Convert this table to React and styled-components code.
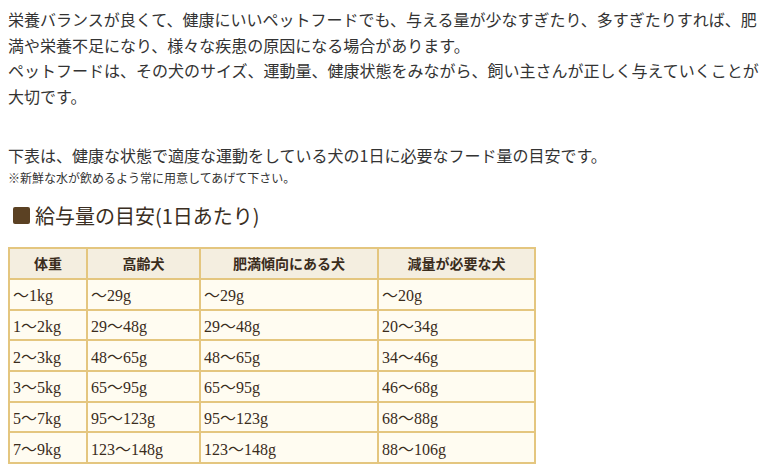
import React from "react";
import styled, { createGlobalStyle } from "styled-components";

const GlobalStyle = createGlobalStyle`
  body {
    margin: 0;
    background: #ffffff;
    font-family: "Noto Sans CJK JP", "Noto Sans", sans-serif;
    color: #333333;
  }
`;

const rows = [
  ["〜1kg", "〜29g", "〜29g", "〜20g"],
  ["1〜2kg", "29〜48g", "29〜48g", "20〜34g"],
  ["2〜3kg", "48〜65g", "48〜65g", "34〜46g"],
  ["3〜5kg", "65〜95g", "65〜95g", "46〜68g"],
  ["5〜7kg", "95〜123g", "95〜123g", "68〜88g"],
  ["7〜9kg", "123〜148g", "123〜148g", "88〜106g"],
];

const columns = [
  { label: "体重", width: 78 },
  { label: "高齢犬", width: 113 },
  { label: "肥満傾向にある犬", width: 178 },
  { label: "減量が必要な犬", width: 157 },
];

const App = () => {
  return (
    <Page>
      <GlobalStyle />
      <Text>
        栄養バランスが良くて、健康にいいペットフードでも、与える量が少なすぎたり、多すぎたりすれば、肥満や栄養不足になり、様々な疾患の原因になる場合があります。
        <br />
        ペットフードは、その犬のサイズ、運動量、健康状態をみながら、飼い主さんが正しく与えていくことが大切です。
      </Text>
      <Text top={34}>
        下表は、健康な状態で適度な運動をしている犬の1日に必要なフード量の目安です。
      </Text>
      <Note>※新鮮な水が飲めるよう常に用意してあげて下さい。</Note>
      <Heading>
        <Square />
        給与量の目安(1日あたり)
      </Heading>
      <Table>
        <thead>
          <tr>
            {columns.map((c) => (
              <Th key={c.label} style={{ width: c.width }}>
                {c.label}
              </Th>
            ))}
          </tr>
        </thead>
        <tbody>
          {rows.map((r) => (
            <tr key={r[0]}>
              {r.map((v, i) => (
                <Td key={i}>{v}</Td>
              ))}
            </tr>
          ))}
        </tbody>
      </Table>
    </Page>
  );
};

const Page = styled.div`
  width: 752px;
  padding: 7px 0 0 8px;
`;

const Text = styled.p`
  margin: 0;
  margin-top: ${(props) => (props.top ? props.top + "px" : "0")};
  font-size: 16px;
  line-height: 25.6px;
  color: #333333;
`;

const Note = styled.p`
  margin: 0;
  font-size: 12px;
  line-height: 18px;
  color: #333333;
`;

const Heading = styled.h2`
  display: flex;
  align-items: center;
  margin: 14px 0 0 0;
  font-size: 20px;
  font-weight: 400;
  line-height: 30px;
  color: #3a2e22;
`;

const Square = styled.span`
  display: inline-block;
  width: 17px;
  height: 17px;
  border-radius: 2px;
  background: #5b4123;
  margin: 0 5px 0 5px;
`;

const Table = styled.table`
  margin-top: 16px;
  border-collapse: collapse;
  background: #fffcf1;
`;

const Th = styled.th`
  box-sizing: border-box;
  border: 2px solid #e4c67f;
  background: #f4eee0;
  font-size: 14px;
  font-weight: 700;
  color: #3a2c1c;
  height: 31px;
  padding: 0 4px;
  text-align: center;
`;

const Td = styled.td`
  border: 2px solid #e4c67f;
  font-family: "Liberation Serif", "Noto Sans CJK JP", serif;
  font-size: 16px;
  color: #3a2c1c;
  height: 28.7px;
  padding: 0 3px;
  text-align: left;
`;

export default App;
